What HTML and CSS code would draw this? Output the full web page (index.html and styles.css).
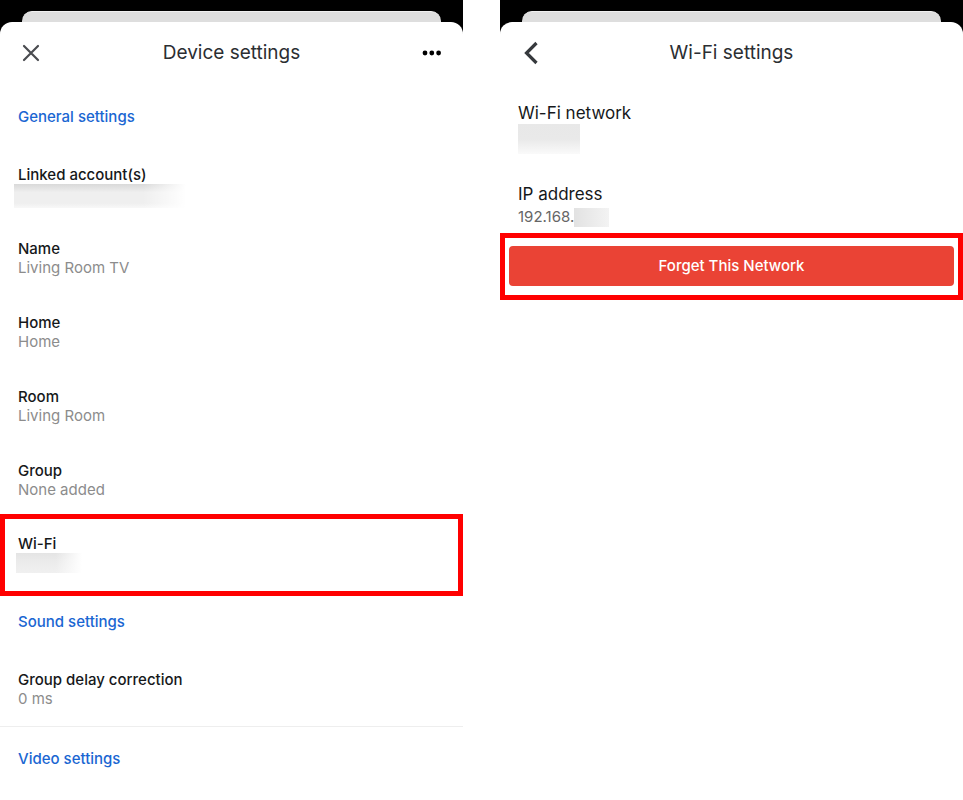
FILE: index.html
```html
<!DOCTYPE html>
<html lang="en">
<head>
    <meta charset="UTF-8">
    <meta name="viewport" content="width=device-width, initial-scale=1">
    <title>Device settings</title>
    <link rel="stylesheet" href="styles.css">
</head>
<body>
    <main class="screens">
        <section class="phone">
            <div class="back-sheet"></div>
            <div class="sheet">
                <header class="topbar">
                    <button class="icon-btn" type="button" aria-label="Close">
                        <svg width="26" height="26" viewBox="0 0 26 26"><path d="M6 6l14 14M20 6L6 20" fill="none" stroke="#4a4c50" stroke-width="2.2" stroke-linecap="round"/></svg>
                    </button>
                    <h1>Device settings</h1>
                    <button class="icon-btn" type="button" aria-label="More options">
                        <svg width="26" height="26" viewBox="0 0 26 26"><g fill="#000"><circle cx="6" cy="13" r="2.4"/><circle cx="12.800" cy="13" r="2.4"/><circle cx="19.600" cy="13" r="2.4"/></g></svg>
                    </button>
                </header>

                <h2 class="section-title">General settings</h2>
                <div class="item">
                    <div class="label">Linked account(s)</div>
                    <div class="redacted account"></div>
                </div>
                <div class="item">
                    <div class="label">Name</div>
                    <div class="value">Living Room TV</div>
                </div>
                <div class="item">
                    <div class="label">Home</div>
                    <div class="value">Home</div>
                </div>
                <div class="item">
                    <div class="label">Room</div>
                    <div class="value">Living Room</div>
                </div>
                <div class="item group">
                    <div class="label">Group</div>
                    <div class="value">None added</div>
                </div>
                <div class="item highlight">
                    <div class="label">Wi-Fi</div>
                    <div class="redacted wifi"></div>
                </div>

                <h2 class="section-title sound">Sound settings</h2>
                <div class="item divider">
                    <div class="label">Group delay correction</div>
                    <div class="value">0 ms</div>
                </div>

                <h2 class="section-title video">Video settings</h2>
            </div>
        </section>

        <section class="phone">
            <div class="back-sheet"></div>
            <div class="sheet">
                <header class="topbar">
                    <button class="icon-btn" type="button" aria-label="Back">
                        <svg width="26" height="26" viewBox="0 0 26 26"><path d="M18.500 3L8.500 13L18.500 23" fill="none" stroke="#36393d" stroke-width="3.2"/></svg>
                    </button>
                    <h1>Wi-Fi settings</h1>
                </header>

                <div class="details">
                    <div class="label">Wi-Fi network</div>
                    <div class="redacted network"></div>
                    <div class="label">IP address</div>
                    <div class="ip">192.168.<span class="redacted ip-end"></span></div>
                </div>
                <div class="forget">
                    <button class="forget-btn" type="button">Forget This Network</button>
                </div>
            </div>
        </section>
    </main>
</body>
</html>
```
FILE: styles.css
```css
* {
    box-sizing: border-box;
}

body {
    margin: 0;
    font-family: Inter, "Liberation Sans", sans-serif;
    background-color: #fff;
    color: #16181a;
}

h1, h2 {
    margin: 0;
}

.screens {
    display: grid;
    grid-template-columns: 1fr 1fr;
    gap: 37px;
    min-height: 100vh;
}

.phone {
    display: flex;
    flex-direction: column;
    padding-top: 11px;
    background-color: #000;
}

.back-sheet {
    height: 11px;
    margin: 0 22px;
    background-color: #dedede;
    border-top: 1px solid #f0f0f0;
    border-radius: 10px 10px 0 0;
}

.sheet {
    flex: 1;
    background-color: #fff;
    border-radius: 12px 12px 0 0;
}

.topbar {
    display: grid;
    grid-template-columns: 26px 1fr 26px;
    align-items: center;
    height: 62px;
    padding: 0 18px;
}

.topbar h1 {
    font-size: 19px;
    line-height: 24px;
    font-weight: 400;
    text-align: center;
    color: #2b2e32;
}

.icon-btn {
    display: flex;
    padding: 0;
    border: none;
    background: none;
    cursor: pointer;
}

.section-title {
    padding: 23px 18px 21px;
    font-size: 15px;
    line-height: 19px;
    font-weight: 500;
    color: #1a66d2;
}

.section-title.sound {
    padding-top: 16px;
}

.section-title.video {
    padding-top: 22px;
}

.item {
    padding: 18px;
    font-size: 15px;
    line-height: 19px;
}

.item .label {
    font-weight: 500;
}

.value {
    color: #8c8c8c;
}

.item.group {
    padding-bottom: 15px;
}

.item.highlight {
    padding: 15px 13px 18px;
    border: 5px solid #f00;
}

.item.divider {
    border-bottom: 1px solid #eee;
}

/* hidden private values */
.account {
    width: 172px;
    height: 24px;
    margin: 0 0 -5px -4px;
    background: linear-gradient(to right, transparent 75%, #fff), linear-gradient(to bottom, #d9d9d9, #efefef 35%, #efefef 80%, #f8f8f8);
}

.wifi {
    width: 66px;
    height: 20px;
    margin-left: -2px;
    background: linear-gradient(to right, transparent 60%, #fff), linear-gradient(to bottom, #e4e4e4, #ebebeb 40%, #f0f0f0);
}

.details {
    padding: 18px 18px 6px;
}

.details .label {
    font-size: 17px;
    line-height: 22px;
}

.network {
    width: 62px;
    height: 30px;
    margin-bottom: 29px;
    background: linear-gradient(to bottom, #e8e8e8, #e9e9e9 50%, #fafafa);
}

.ip {
    display: flex;
    align-items: center;
    padding-top: 2px;
    font-size: 15px;
    line-height: 20px;
    color: #666;
}

.ip-end {
    width: 35px;
    height: 19px;
    background: linear-gradient(to right, #e2e2e2, #f3f3f3);
}

.forget {
    padding: 8px 4px 9px;
    border: 5px solid #f00;
}

.forget-btn {
    display: block;
    width: 100%;
    padding: 10px;
    border: none;
    border-radius: 4px;
    background-color: #ea4335;
    color: #fff;
    font-family: inherit;
    font-size: 15px;
    line-height: 20px;
    font-weight: 500;
    cursor: pointer;
}
```
